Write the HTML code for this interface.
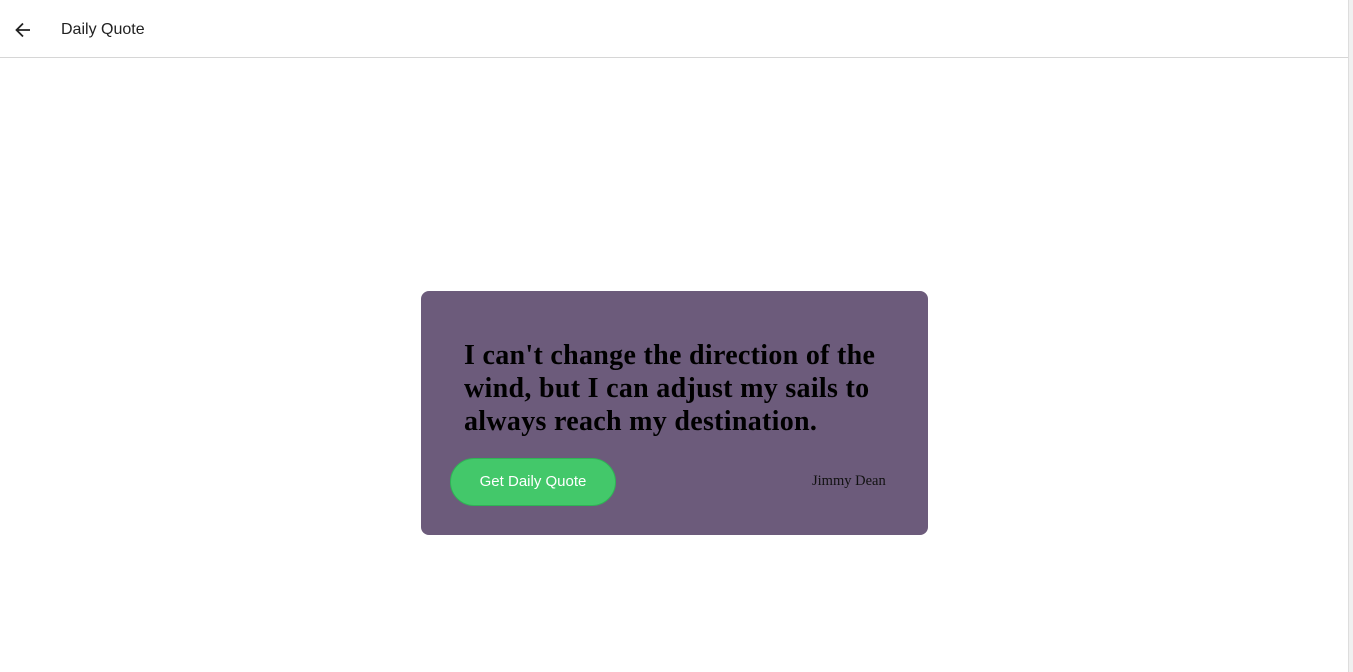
<!DOCTYPE html>
<html><head><style>
body{margin:0;width:1353px;height:672px;background:#fff;position:relative;overflow:hidden;font-family:"Liberation Sans",sans-serif}
.hdr{position:absolute;left:0;top:0;width:1349px;height:57px;border-bottom:1px solid #d6d6d6}
.title{position:absolute;left:61px;top:21px;font-size:16px;color:#222}
.sb{position:absolute;right:0;top:0;width:4px;height:672px;background:#f0f0f0;border-left:1px solid #ddd}
.card{position:absolute;left:421px;top:291px;width:507px;height:244px;background:#6c5b7b;border-radius:8px}
.q{position:absolute;left:43px;top:48px;width:450px;font:bold 28px/33px "Liberation Serif",serif;letter-spacing:0.3px;color:#000;margin:0}
.btn{position:absolute;left:29px;top:167px;width:164px;height:46px;border-radius:24px;background:#43c86a;border:1px solid #2fb455;color:#fff;font-size:15px;text-align:center;line-height:46px}
.a{position:absolute;left:391px;top:182px;font:14.5px "Liberation Serif",serif;color:#111}
</style></head><body>
<div class="hdr">
<svg style="position:absolute;left:14px;top:21px" width="18" height="18" viewBox="0 0 18 18"><path d="M16 9H3M9 2.5L2.5 9 9 15.5" stroke="#222" stroke-width="1.8" fill="none"/></svg>
<div class="title">Daily Quote</div></div>
<div class="sb"></div>
<div class="card">
<p class="q">I can't change the direction of the wind, but I can adjust my sails to always reach my destination.</p>
<div class="btn">Get Daily Quote</div>
<div class="a">Jimmy Dean</div>
</div>
</body></html>
